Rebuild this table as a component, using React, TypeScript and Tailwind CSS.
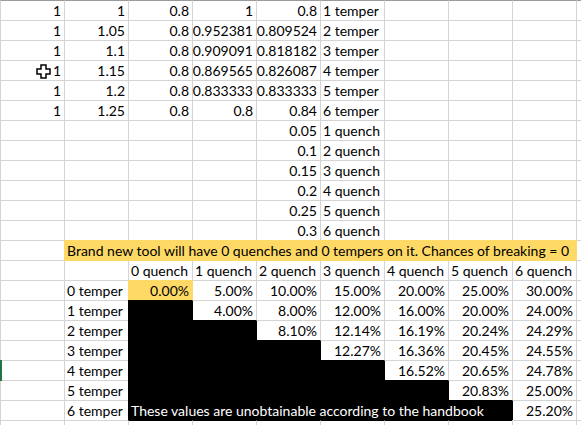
type Cell = { t?: string; al?: "l" | "r"; f?: "y" | "k"; s?: number };

const r = (t: string): Cell => ({ t, al: "r" });
const l = (t: string): Cell => ({ t, al: "l" });
const e: Cell = {};
const K: Cell = { f: "k" };

// sheet contents, one array per row, 10 columns (last one cut off)
const rows: Cell[][] = [
  [r("1"), r("1"), r("0.8"), r("1"), r("0.8"), l("1 temper"), e, e, e, e],
  [r("1"), r("1.05"), r("0.8"), r("0.952381"), r("0.809524"), l("2 temper"), e, e, e, e],
  [r("1"), r("1.1"), r("0.8"), r("0.909091"), r("0.818182"), l("3 temper"), e, e, e, e],
  [r("1"), r("1.15"), r("0.8"), r("0.869565"), r("0.826087"), l("4 temper"), e, e, e, e],
  [r("1"), r("1.2"), r("0.8"), r("0.833333"), r("0.833333"), l("5 temper"), e, e, e, e],
  [r("1"), r("1.25"), r("0.8"), r("0.8"), r("0.84"), l("6 temper"), e, e, e, e],
  [e, e, e, e, r("0.05"), l("1 quench"), e, e, e, e],
  [e, e, e, e, r("0.1"), l("2 quench"), e, e, e, e],
  [e, e, e, e, r("0.15"), l("3 quench"), e, e, e, e],
  [e, e, e, e, r("0.2"), l("4 quench"), e, e, e, e],
  [e, e, e, e, r("0.25"), l("5 quench"), e, e, e, e],
  [e, e, e, e, r("0.3"), l("6 quench"), e, e, e, e],
  [
    e,
    { t: "Brand new tool will have 0 quenches and 0 tempers on it. Chances of breaking = 0", al: "l", f: "y", s: 8 },
    e,
  ],
  [e, e, l("0 quench"), l("1 quench"), l("2 quench"), l("3 quench"), l("4 quench"), l("5 quench"), l("6 quench"), e],
  [e, l("0 temper"), { t: "0.00%", al: "r", f: "y" }, r("5.00%"), r("10.00%"), r("15.00%"), r("20.00%"), r("25.00%"), r("30.00%"), e],
  [e, l("1 temper"), K, r("4.00%"), r("8.00%"), r("12.00%"), r("16.00%"), r("20.00%"), r("24.00%"), e],
  [e, l("2 temper"), K, K, r("8.10%"), r("12.14%"), r("16.19%"), r("20.24%"), r("24.29%"), e],
  [e, l("3 temper"), K, K, K, r("12.27%"), r("16.36%"), r("20.45%"), r("24.55%"), e],
  [e, l("4 temper"), K, K, K, K, r("16.52%"), r("20.65%"), r("24.78%"), e],
  [e, l("5 temper"), K, K, K, K, K, r("20.83%"), r("25.00%"), e],
  [
    e,
    l("6 temper"),
    { t: "These values are unobtainable according to the handbook", al: "l", f: "k", s: 6 },
    r("25.20%"),
    e,
  ],
  [e, e, e, e, e, e, e, e, e, e],
];

// fill per column, so borders next to a filled cell take its colour
const fills = rows.map((row) => {
  const out: (string | undefined)[] = [];
  row.forEach((c) => {
    for (let i = 0; i < (c.s ?? 1); i++) out.push(c.f);
  });
  return out;
});

const leftCls: Record<string, string> = {
  g: "border-l-[#d4d4d4]",
  y: "border-l-[#ffd966]",
  k: "border-l-black",
};
const topCls: Record<string, string> = {
  g: "border-t-[#d4d4d4]",
  y: "border-t-[#ffd966]",
  k: "border-t-black",
  d: "border-t-[#9b9b9b]",
};
const bgCls: Record<string, string> = {
  y: "bg-[#ffd966] text-black",
  k: "bg-black text-white",
};
const spanCls: Record<number, string> = { 1: "", 6: "col-span-6", 8: "col-span-8" };

export default function App() {
  return (
    <div
      className="relative w-[581px] h-[425px] overflow-hidden bg-white text-black"
      style={{ fontFamily: "Lato, 'Liberation Sans', sans-serif" }}
    >
      <div className="grid grid-cols-[repeat(10,64px)] auto-rows-[20px] text-[14px]">
        {rows.map((row, ri) => {
          let col = 0;
          return row.map((c, ci) => {
            const start = col;
            col += c.s ?? 1;
            const leftFill = c.f ?? (start > 0 ? fills[ri][start - 1] : undefined);
            const aboveFill = c.f ?? (ri > 0 ? fills[ri - 1][start] : undefined);
            const lc = leftCls[leftFill ?? "g"];
            const tc = topCls[ri === 0 ? "d" : aboveFill ?? "g"];
            return (
              <div
                key={`${ri}-${ci}`}
                className={`border-l border-t ${lc} ${tc} ${c.f ? bgCls[c.f] : ""} ${spanCls[c.s ?? 1]} flex items-end whitespace-nowrap leading-[19px] ${
                  c.al === "r" ? "justify-end pr-[3px]" : "justify-start pl-[2px]"
                }`}
              >
                {c.t}
              </div>
            );
          });
        })}
      </div>

      {/* row selection marker on the left edge */}
      <div className="absolute left-0 top-[360px] w-[2px] h-[21px] bg-[#217346]" />

      {/* excel cell cursor */}
      <svg className="absolute left-[36px] top-[64px]" width="15" height="15" viewBox="0 0 15 15">
        <polygon
          points="5,1 10,1 10,5 14,5 14,10 10,10 10,14 5,14 5,10 1,10 1,5 5,5"
          fill="#fff"
          stroke="#000"
          strokeWidth="1.5"
        />
      </svg>
    </div>
  );
}
